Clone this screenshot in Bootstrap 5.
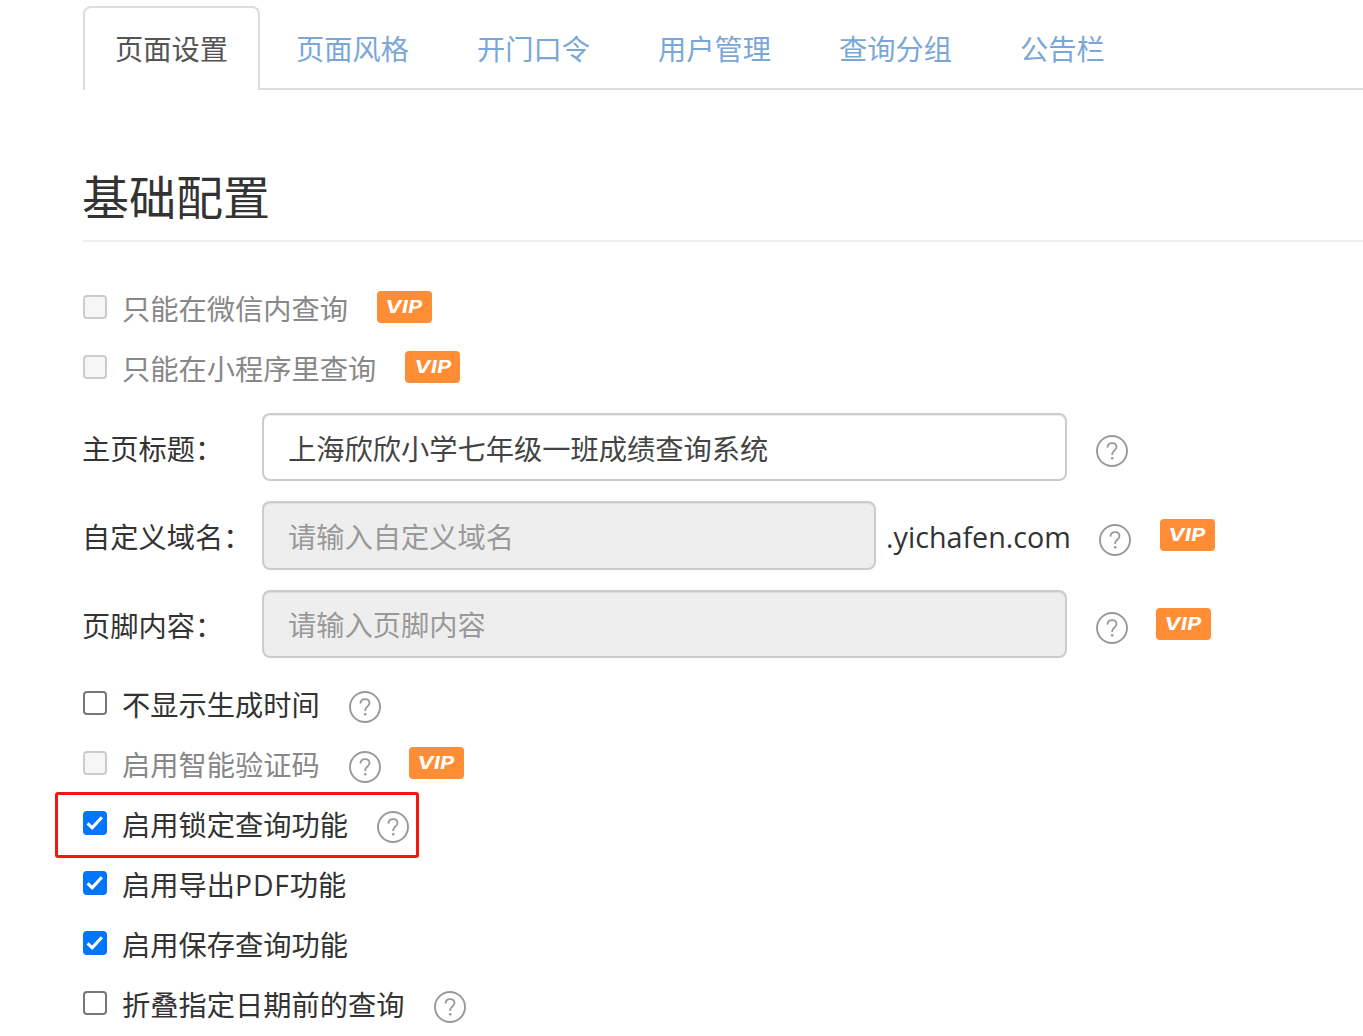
<!DOCTYPE html>
<html lang="zh-CN">
<head>
<meta charset="utf-8">
<title>基础配置</title>
<link href="https://cdn.jsdelivr.net/npm/bootstrap@5.3.0/dist/css/bootstrap.min.css" rel="stylesheet">
<style>
html,body{height:1036px;overflow:hidden;background:#fff}
body{font-family:"Open Sans","Noto Sans CJK SC",sans-serif;font-size:28.25px;color:#333;line-height:1.4}
.shell{padding:6px 0 0 83px;width:1363px}
.tabs-bar{height:84px;border-bottom:2px solid #ddd;flex-wrap:nowrap;gap:4px}
.tabs-bar .nav-link{height:84px;padding:0 30px;border:2px solid transparent;border-bottom:0;border-radius:8px 8px 0 0;margin:0;color:#7aa7d8;font-size:28.25px;line-height:82px;background:none;display:block}
.tabs-bar .nav-link.active{color:#555;border-color:#ddd;background:#fff;height:84px}
.page-head{font-size:47px;font-weight:400;line-height:60px;color:#333;margin:77px 0 0;padding-bottom:13px;border-bottom:2px solid #eee;text-indent:-1px}
.head-wrap{margin-bottom:35px}
.check-line{height:60px;position:relative}
.check-line .form-check-input{width:24px;height:24px;margin:0 15px 0 0;border:2px solid #767676;border-radius:4px;flex:none;float:none;box-shadow:none}
.check-line .form-check-input:checked{background-color:#0075ff;border-color:#0075ff;background-image:url("data:image/svg+xml,%3csvg xmlns='http://www.w3.org/2000/svg' viewBox='0 0 20 20'%3e%3cpath fill='none' stroke='%23fff' stroke-width='3.2' d='M2.6 10.4l4.6 4.4 9.6-10.6'/%3e%3c/svg%3e");background-size:100%}
.check-line .form-check-input:disabled{opacity:1;background-color:#f6f6f6;border-color:#ccc}
.check-line label{margin:6px 0 0;color:#333}
.check-line .form-check-input:disabled~label{opacity:1;color:#888}
.help-mark{width:32px;height:32px;flex:none;margin-top:8px;margin-left:29px}
.vip-tag{width:55px;height:32px;flex:none;background:#ff8d36;color:#fff;border-radius:4px;font:700 18px/32px "Inter",sans-serif;text-align:center;margin-left:29px}
.help-mark + .vip-tag{margin-left:28px}
.vip-tag span{display:inline-block;transform:skewX(-10deg) scaleX(1.22)}
.form-line{margin-bottom:20px;height:68px}
.form-line label{width:179px;margin:5px 0 0;color:#333;flex:none;text-indent:-1px}
.form-line .form-control{height:68px;border:2px solid #ccc;border-radius:8px;padding:1px 24px 0;font-size:28.25px;color:#444;box-shadow:inset 0 1px 1px rgba(0,0,0,.075);background:#fff;flex:none}
.form-line .form-control:disabled{background:#eee;opacity:1;padding-top:2px}
.form-line .form-control::placeholder{color:#999;opacity:1}
.w-full{width:805px}
.w-short{width:614px}
.line-b{height:69px}
.line-b .form-control{height:69px}
.suffix{margin:3px 0 0 10px;width:184px;flex:none;white-space:nowrap;color:#333;font-size:28.7px}
.line-b .help-mark + .vip-tag{margin:-1px 0 0 29px}
.red-frame{position:absolute;left:-28px;top:-1px;width:364px;height:66px;border:3px solid #f5170f;border-radius:3px;pointer-events:none}
.after-form{margin-top:-5px}
.latin-run{letter-spacing:.9px}
</style>
</head>
<body>
<svg width="0" height="0" class="d-block position-absolute"><symbol id="ask" viewBox="0 0 32 32"><circle cx="16" cy="16" r="15" fill="none" stroke="#999" stroke-width="1.9"/><path d="M11.4 12.6c.2-2.8 2-4.4 4.7-4.4 2.6 0 4.4 1.5 4.4 3.8 0 1.7-.9 2.7-2.3 3.7-1.4 1-2 1.8-2 3.4v.9" fill="none" stroke="#999" stroke-width="1.8"/><circle cx="16.2" cy="23.2" r="1.3" fill="#999"/></symbol></svg>
<div class="shell">
  <ul class="nav tabs-bar">
    <li class="nav-item"><a class="nav-link active" href="#">页面设置</a></li>
    <li class="nav-item"><a class="nav-link" href="#">页面风格</a></li>
    <li class="nav-item"><a class="nav-link" href="#">开门口令</a></li>
    <li class="nav-item"><a class="nav-link" href="#">用户管理</a></li>
    <li class="nav-item"><a class="nav-link" href="#">查询分组</a></li>
    <li class="nav-item"><a class="nav-link" href="#">公告栏</a></li>
  </ul>
  <div class="head-wrap"><h1 class="page-head">基础配置</h1></div>

  <div class="check-line d-flex align-items-center"><input class="form-check-input" type="checkbox" id="c1" disabled><label for="c1">只能在微信内查询</label><span class="vip-tag"><span>VIP</span></span></div>
  <div class="check-line d-flex align-items-center mb-3"><input class="form-check-input" type="checkbox" id="c2" disabled><label for="c2">只能在小程序里查询</label><span class="vip-tag"><span>VIP</span></span></div>

  <div class="form-line d-flex align-items-center"><label for="t1">主页标题：</label><input id="t1" class="form-control w-full" type="text" value="上海欣欣小学七年级一班成绩查询系统"><svg class="help-mark"><use href="#ask"/></svg></div>
  <div class="form-line line-b d-flex align-items-center"><label for="t2">自定义域名：</label><input id="t2" class="form-control w-short" type="text" placeholder="请输入自定义域名" disabled><span class="suffix">.yichafen.com</span><svg class="help-mark"><use href="#ask"/></svg><span class="vip-tag"><span>VIP</span></span></div>
  <div class="form-line line-c d-flex align-items-center"><label for="t3">页脚内容：</label><input id="t3" class="form-control w-full" type="text" placeholder="请输入页脚内容" disabled><svg class="help-mark"><use href="#ask"/></svg><span class="vip-tag"><span>VIP</span></span></div>

  <div class="after-form">
  <div class="check-line d-flex align-items-center"><input class="form-check-input" type="checkbox" id="c3"><label for="c3">不显示生成时间</label><svg class="help-mark"><use href="#ask"/></svg></div>
  <div class="check-line d-flex align-items-center"><input class="form-check-input" type="checkbox" id="c4" disabled><label for="c4">启用智能验证码</label><svg class="help-mark"><use href="#ask"/></svg><span class="vip-tag"><span>VIP</span></span></div>
  <div class="check-line d-flex align-items-center"><input class="form-check-input" type="checkbox" id="c5" checked><label for="c5">启用锁定查询功能</label><svg class="help-mark"><use href="#ask"/></svg><span class="red-frame"></span></div>
  <div class="check-line d-flex align-items-center"><input class="form-check-input" type="checkbox" id="c6" checked><label for="c6">启用导出<span class="latin-run">PDF</span>功能</label></div>
  <div class="check-line d-flex align-items-center"><input class="form-check-input" type="checkbox" id="c7" checked><label for="c7">启用保存查询功能</label></div>
  <div class="check-line d-flex align-items-center"><input class="form-check-input" type="checkbox" id="c8"><label for="c8">折叠指定日期前的查询</label><svg class="help-mark"><use href="#ask"/></svg></div>
  </div>
</div>
<script src="https://cdn.jsdelivr.net/npm/bootstrap@5.3.0/dist/js/bootstrap.bundle.min.js"></script>
</body>
</html>
